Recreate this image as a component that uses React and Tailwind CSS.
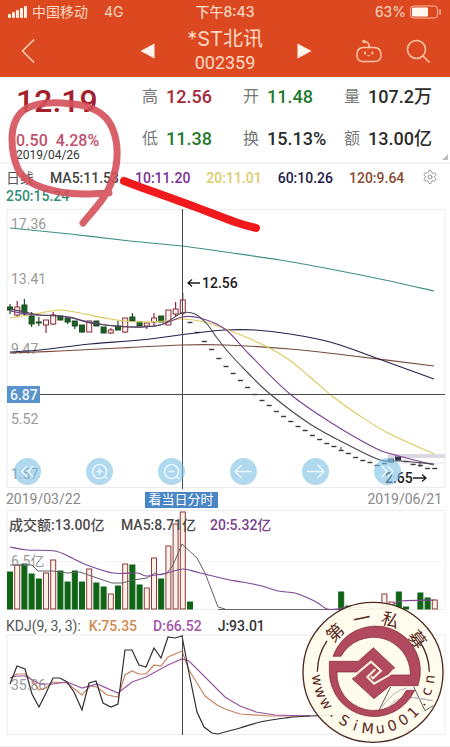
import { Settings } from "lucide-react";

const STEP = 7.2;
const FIRST_X = 10;

// [bodyTop, bodyBottom, high, low, up]
const candles = [
  [307, 310, 304, 314, false],
  [307, 315, 301, 317, true],
  [305, 314, 299, 316, false],
  [316, 324, 312, 327, false],
  [322, 323, 317, 326, false],
  [320, 325, 320, 333, true],
  [315, 324, 312, 325, true],
  [316, 320, 316, 320, false],
  [318, 322, 317, 324, false],
  [321, 326, 321, 329, false],
  [325, 332, 325, 333, false],
  [321, 332, 321, 332, true],
  [321, 326, 321, 326, false],
  [327, 333, 327, 333, false],
  [330, 333, 328, 334, true],
  [326, 330, 321, 330, false],
  [318, 332, 318, 333, true],
  [317, 321, 313, 322, false],
  [322, 326, 322, 326, false],
  [323, 326, 323, 329, true],
  [318, 322, 313, 326, true],
  [316, 322, 316, 322, false],
  [310, 325, 310, 325, true],
  [309, 314, 302, 316, true],
  [300, 313, 293, 315, true],
];

// one-price days, starting right after the last candle
const dashes = [
  322, 332, 341, 349, 358, 366, 373, 380, 387, 394, 400, 405, 411, 416, 421, 426, 430, 435, 439,
  443, 446, 450, 453, 457, 460, 462, 465, 463, 461, 459, 461, 464, 465, 468, 468,
];

// [slot, top, up]
const volumes = [
  [0, 572, false], [1, 565, true], [2, 564, false], [3, 574, false], [4, 579, false],
  [5, 573, true], [6, 560, true], [7, 571, false], [8, 582, false], [9, 571, false],
  [10, 582, false], [11, 569, true], [12, 583, false], [13, 587, false], [14, 594, true],
  [15, 586, false], [16, 564, true], [17, 565, false], [18, 585, false], [19, 588, true],
  [20, 558, true], [21, 579, false], [22, 546, true], [23, 524, true], [24, 512, true],
  [25, 602, false], [46, 592, false], [47, 606, false], [52, 594, true], [53, 602, true],
  [54, 592, false], [55, 607, false], [57, 593, false], [58, 598, false], [59, 600, true],
];

const priceLines = [
  { color: "#3f8f86", points: [[10, 228], [70, 234], [130, 241], [182, 246], [225, 252], [280, 260], [330, 269], [380, 279], [434, 291]] },
  { color: "#7a4a3c", points: [[10, 353], [60, 351], [120, 348], [182, 345], [225, 345], [290, 349], [345, 355], [434, 366]] },
  { color: "#23204e", points: [[10, 352], [40, 350], [90, 344], [140, 340], [195, 333], [225, 330], [255, 330], [290, 334], [330, 342], [368, 355], [434, 379]] },
  { color: "#ddc95c", points: [[10, 318], [35, 314], [60, 310], [80, 313], [110, 319], [140, 322], [165, 321], [182, 319], [205, 322], [225, 329], [255, 341], [285, 357], [310, 377], [332, 396], [360, 416], [390, 434], [434, 454]] },
  { color: "#7b4393", points: [[10, 311], [35, 315], [60, 316], [100, 324], [130, 327], [160, 325], [182, 317], [200, 318], [225, 329], [250, 355], [290, 394], [330, 422], [375, 448], [395, 455], [434, 465]] },
  { color: "#4a4550", points: [[10, 309], [25, 312], [40, 315], [70, 317], [90, 323], [130, 327], [160, 325], [182, 313], [195, 314], [207, 324], [217, 338], [230, 354], [248, 373], [270, 394], [310, 424], [350, 446], [380, 460], [400, 461], [434, 464]] },
];

const volumeAvg = [[10, 565], [32, 565], [38, 571], [53, 571], [67, 573], [80, 572], [97, 578], [112, 583], [122, 583], [133, 580], [147, 578], [155, 573], [160, 575], [167, 573], [173, 565], [182, 544], [197, 558], [205, 573], [218, 607], [225, 609]];
const volumeAvg20 = [[10, 547], [27, 550], [55, 551], [72, 558], [87, 565], [113, 573], [137, 573], [147, 576], [167, 573], [183, 569], [200, 573], [225, 579], [242, 582], [262, 586], [278, 591], [295, 593], [308, 598], [318, 603], [327, 609], [338, 609], [348, 607], [368, 608], [377, 609], [392, 605], [402, 601], [434, 600]];

const lineJ = [[10, 684], [17, 666], [25, 669], [32, 694], [39, 707], [46, 693], [53, 678], [60, 678], [67, 682], [74, 692], [82, 710], [89, 683], [96, 681], [103, 703], [111, 707], [118, 704], [125, 650], [132, 650], [139, 665], [146, 667], [154, 648], [161, 658], [168, 637], [175, 638], [182, 636], [189, 673], [197, 712], [204, 727], [212, 733], [218, 734], [225, 732]];
const tailJ = [[225, 732], [240, 728], [260, 722], [285, 718], [310, 716], [380, 714]];
const lineK = [[10, 678], [17, 674], [25, 674], [32, 680], [39, 690], [46, 688], [53, 682], [67, 683], [82, 695], [90, 686], [97, 687], [107, 695], [118, 697], [125, 675], [132, 671], [139, 674], [146, 674], [154, 665], [161, 666], [168, 657], [182, 651], [189, 670], [197, 683], [205, 696], [217, 705], [225, 709], [240, 714], [270, 716], [310, 716]];
const lineD = [[10, 678], [17, 676], [25, 676], [40, 684], [53, 684], [67, 682], [82, 688], [97, 684], [118, 693], [132, 682], [146, 677], [168, 665], [182, 659], [189, 661], [204, 676], [225, 697], [240, 706], [256, 712], [275, 715], [310, 716]];

const averages = [
  { text: "MA5:11.53", color: "text-[#444444]" },
  { text: "10:11.20", color: "text-[#7a2f96]" },
  { text: "20:11.01", color: "text-[#dccb6a]" },
  { text: "60:10.26", color: "text-[#1c1b4b]" },
  { text: "120:9.64", color: "text-[#8a4b30]" },
  { text: "250:15.24", color: "text-[#2f8f78]" },
];

const quotes = [
  { label: "高", value: "12.56", color: "text-[#a8283a]" },
  { label: "开", value: "11.48", color: "text-[#1f7a2c]" },
  { label: "量", value: "107.2万", color: "text-[#2b2b2b]" },
  { label: "低", value: "11.38", color: "text-[#1f7a2c]" },
  { label: "换", value: "15.13%", color: "text-[#2b2b2b]" },
  { label: "额", value: "13.00亿", color: "text-[#2b2b2b]" },
];

const slotX = (i) => FIRST_X + i * STEP;

const straight = (pts) => "M" + pts.map((p) => p.join(" ")).join("L");

// Catmull-Rom spline as cubic beziers
const smooth = (pts) => {
  let d = `M${pts[0].join(" ")}`;
  for (let i = 0; i < pts.length - 1; i++) {
    const a = pts[i - 1] || pts[i];
    const b = pts[i];
    const c = pts[i + 1];
    const e = pts[i + 2] || c;
    d += `C${b[0] + (c[0] - a[0]) / 6} ${b[1] + (c[1] - a[1]) / 6} ${c[0] - (e[0] - b[0]) / 6} ${c[1] - (e[1] - b[1]) / 6} ${c[0]} ${c[1]}`;
  }
  return d;
};

const StatusBar = () => (
  <div className="flex h-6 items-center justify-between px-2 text-sm text-[#ffd9c4]">
    <div className="flex flex-1 items-center">
      <svg width="20" height="12" viewBox="0 0 20 12" fill="#fff1e6">
        <rect x="0" y="8" width="3" height="4" rx="1" />
        <rect x="4" y="6" width="3" height="6" rx="1" />
        <rect x="8" y="4" width="3" height="8" rx="1" />
        <rect x="12" y="2" width="3" height="10" rx="1" />
        <rect x="16" y="0" width="3" height="12" rx="1" />
      </svg>
      <span className="ml-1">中国移动</span>
      <span className="ml-4">4G</span>
    </div>
    <span className="font-medium">下午8:43</span>
    <div className="flex flex-1 items-center justify-end gap-1">
      <span>63%</span>
      <svg width="32" height="14" viewBox="0 0 32 14" fill="none">
        <rect x="0.5" y="1" width="27" height="12" rx="3" stroke="#f7b79c" />
        <rect x="2" y="2.5" width="16" height="9" rx="1" fill="#fff6ee" />
        <path d="M30 5v4" stroke="#f7b79c" strokeWidth="1.5" strokeLinecap="round" />
      </svg>
    </div>
  </div>
);

const NavBar = () => (
  <div className="flex h-[53px] items-center justify-between px-5">
    <div className="flex flex-1 items-center justify-between">
      <button aria-label="back">
        <svg width="16" height="26" viewBox="0 0 16 26" fill="none" stroke="#ffd0b5" strokeWidth="1.6">
          <path d="M14 1.5L2.5 13L14 24.5" />
        </svg>
      </button>
      <button aria-label="previous stock" className="mr-8">
        <svg width="15" height="16" viewBox="0 0 15 16" fill="#fff4ec">
          <path d="M14.500 0.500V15.500L0.500 8Z" />
        </svg>
      </button>
    </div>
    <div className="text-center text-[#ffd9c4]">
      <h1 className="text-xl leading-6">*ST北讯</h1>
      <p className="font-[Roboto] text-lg leading-6">002359</p>
    </div>
    <div className="flex flex-1 items-center">
      <button aria-label="next stock" className="ml-[34px]">
        <svg width="15" height="16" viewBox="0 0 15 16" fill="#fff4ec">
          <path d="M0.500 0.500V15.500L14.500 8Z" />
        </svg>
      </button>
      <button aria-label="assistant" className="ml-auto">
        <svg width="26" height="24" viewBox="0 0 26 24" fill="none" stroke="#ffc7ab" strokeWidth="1.5" strokeLinecap="round">
          <path d="M7.500 8.500C2.500 8.500 1 12 1 16C1 20.500 3.500 22.500 7 22.500H18.500C22.500 22.500 25 20.500 25 16C25 12 23 8.500 18 8.500Z" />
          <path d="M13 8.500C13.500 5 12 3 8.500 2.500" />
          <circle cx="8" cy="2.500" r="1" fill="#ffc7ab" />
          <path d="M9 13.500v1M16.500 13.500v1" strokeWidth="2" />
          <path d="M11.500 16.500Q12.800 17.500 14 16.500" strokeWidth="1" />
        </svg>
      </button>
      <button aria-label="search" className="ml-6">
        <svg width="24" height="24" viewBox="0 0 24 24" fill="none" stroke="#ffc7ab" strokeWidth="1.5" strokeLinecap="round">
          <circle cx="10.500" cy="10.500" r="9" />
          <path d="M17 17L23 23" />
        </svg>
      </button>
    </div>
  </div>
);

const Quote = () => (
  <section className="grid grid-cols-[138fr_312fr] border-b-2 border-[#f3f1f6] font-medium">
    <div className="pb-px pl-4 pt-2">
      <p className="text-[32px] leading-8 text-[#a3202c]">12.19</p>
      <p className="mt-4 flex gap-2 text-base leading-4 text-[#c2506a]">
        <span>0.50</span>
        <span>4.28%</span>
      </p>
      <p className="text-xs font-normal leading-3 text-[#333333]">2019/04/26</p>
    </div>
    <div className="relative grid grid-cols-[101fr_101fr_110fr] content-start gap-y-[18px] pt-2">
      {quotes.map((item) => (
        <div key={item.label} className="flex items-center gap-2 pl-1 text-lg leading-6">
          <span className="text-base leading-6 font-normal text-[#777777]">{item.label}</span>
          <span className={item.color}>{item.value}</span>
        </div>
      ))}
      <svg className="absolute bottom-0.5 right-0.5" width="6" height="6" viewBox="0 0 6 6" fill="#bdbdbd">
        <path d="M6 0V6H0Z" />
      </svg>
    </div>
  </section>
);

const Averages = () => (
  <section className="flex items-start pl-1.5 pr-3 pt-[5px]">
    <div className="flex flex-1 flex-wrap gap-x-4 text-sm leading-[18px] font-medium">
      <span className="font-normal text-[#555555]">日线</span>
      {averages.map((item) => (
        <span key={item.text} className={item.color}>
          {item.text}
        </span>
      ))}
    </div>
    <button aria-label="chart settings">
      <Settings size={16} strokeWidth={1.3} color="#8a8a8a" />
    </button>
  </section>
);

const PriceChart = () => (
  <svg className="block w-full" viewBox="0 205 450 284" fill="none">
    <rect x="7" y="209.500" width="438" height="278" stroke="#ececee" />
    <g fill="#999999" fontSize="14">
      <text x="11" y="229">17.36</text>
      <text x="11" y="284">13.41</text>
      <text x="11" y="354">9.47</text>
      <text x="11" y="424">5.52</text>
      <text x="11" y="479">1.57</text>
    </g>
    <path d="M388 456H445" stroke="#dcd8e2" strokeWidth="4" />
    <path d="M400 463H445" stroke="#e4e0ea" />
    {candles.map(([top, bottom, high, low, up], i) => (
      <g key={i} stroke={up ? "#8c2b36" : "#1f4a24"}>
        <path d={`M${slotX(i)} ${high}V${low}`} strokeWidth="1.200" />
        <rect
          x={slotX(i) - 2.5}
          y={top}
          width="5"
          height={bottom - top}
          fill={up ? "#fff4f0" : "#17601d"}
        />
      </g>
    ))}
    {dashes.map((y, i) => (
      <path key={i} d={`M${slotX(i + 25) - 2.5} ${y + 0.5}h5`} stroke="#3a3a3a" strokeWidth="1.400" />
    ))}
    <path d="M341 447v4M420 462v5" stroke="#3a3a3a" />
    <rect x="388.500" y="459" width="5" height="3" fill="#7aa3bd" stroke="#35505f" />
    <rect x="395.500" y="457" width="5" height="3" fill="#33324a" stroke="#33324a" />
    {priceLines.map((line) => (
      <path key={line.color} d={smooth(line.points)} stroke={line.color} strokeWidth="1.100" />
    ))}
    <path d="M40 394.500H445M182.500 209V489" stroke="#4a4a4a" />
    <rect x="7" y="386" width="33" height="17" fill="#5a92cb" />
    <g fontSize="14" fontWeight="500">
      <text x="10" y="400" fill="#eef7ff">6.87</text>
      <text x="202" y="288" fill="#1c1c1c">12.56</text>
      <text x="385" y="483" fill="#1c1c1c">2.65</text>
    </g>
    <path d="M200 283H188M192 279.500L188 283L192 286.500" stroke="#1c1c1c" strokeWidth="1.300" />
    <path d="M413 478H426M422 474.500L426 478L422 481.500" stroke="#1c1c1c" strokeWidth="1.300" />
  </svg>
);

const tools = [
  { name: "first", icon: <path d="M13 8L8 13.500L13 19M19 8L14 13.500L19 19" /> },
  { name: "zoom in", icon: <path d="M20.500 13.500A7 7 0 1 0 18.500 18.400L21.500 21M20.500 13.500A7 7 0 0 1 18.500 18.400M13.500 10.500V16.500M10.500 13.500H16.500" /> },
  { name: "zoom out", icon: <path d="M20.500 13.500A7 7 0 1 0 18.500 18.400L21.500 21M20.500 13.500A7 7 0 0 1 18.500 18.400M10.500 13.500H16.500" /> },
  { name: "left", icon: <path d="M22 13.500H5M11.500 7L5 13.500L11.500 20" /> },
  { name: "right", icon: <path d="M5 13.500H22M15.500 7L22 13.500L15.500 20" /> },
  { name: "last", icon: <path d="M8 8L13 13.500L8 19M14 8L19 13.500L14 19" /> },
];

const ChartTools = () => (
  <div className="absolute bottom-1 left-[3%] right-[11%] flex justify-between">
    {tools.map((tool) => (
      <button key={tool.name} aria-label={tool.name} className="rounded-full bg-[#7cc0e6]/60">
        <svg width="27" height="27" viewBox="0 0 27 27" fill="none" stroke="#e9f8ff" strokeWidth="1.500">
          {tool.icon}
        </svg>
      </button>
    ))}
  </div>
);

const VolumeChart = () => (
  <svg className="block w-full" viewBox="0 510 450 104" fill="none">
    <path d="M7 510.500H445V609.500H7Z" stroke="#ececee" />
    <path d="M7 561.500H445" stroke="#f6f4f6" />
    <path d="M218 609.500H392" stroke="#6a6470" />
    {volumes.map(([slot, top, up]) => (
      <rect
        key={slot}
        x={slotX(slot) - 2.5}
        y={top}
        width="5"
        height={609 - top}
        fill={up ? "#fdf0e6" : "#0f6416"}
        stroke={up ? "#8c3a3e" : "#0f6416"}
      />
    ))}
    <text x="11" y="566" fill="#999999" fontSize="14">6.5亿</text>
    <path d={straight(volumeAvg)} stroke="#66606a" />
    <path d={smooth(volumeAvg20)} stroke="#7f4796" strokeWidth="1.100" />
    <g fontSize="14" fontWeight="500">
      <text x="9" y="530" fill="#4a4a4a">成交额:13.00亿</text>
      <text x="121" y="530" fill="#4a4a4a">MA5:8.71亿</text>
      <text x="210" y="530" fill="#7c4190">20:5.32亿</text>
    </g>
  </svg>
);

const KdjChart = () => (
  <>
    <div className="flex gap-4 pl-1.5 pt-1 text-sm leading-4 font-medium">
      <p className="flex gap-2">
        <span className="font-normal text-[#555555]">KDJ(9, 3, 3):</span>
        <span className="text-[#d08a4e]">K:75.35</span>
      </p>
      <span className="text-[#a355a8]">D:66.52</span>
      <span className="text-[#333333]">J:93.01</span>
    </div>
    <svg className="block w-full" viewBox="0 634 450 113" fill="none">
      <rect x="7" y="635" width="438" height="99.500" stroke="#ececee" />
      <path d="M0 746.500H450" stroke="#ececee" />
      <text x="11" y="690" fill="#999999" fontSize="14">35.86</text>
      <path d={straight(lineK)} stroke="#c98362" strokeWidth="1.200" />
      <path d={straight(lineD)} stroke="#9a55a0" strokeWidth="1.200" />
      <path d={straight(lineJ) + smooth(tailJ)} stroke="#2f2c33" strokeWidth="1.200" />
      <path d="M182.500 635V735" stroke="#4a4a4a" />
    </svg>
  </>
);

const sealTop = [
  ["第", -134],
  ["一", -102],
  ["私", -72],
  ["募", -37],
];
const sealBottom = "www.SiMu001.cn".split("");

const onRing = (angle, radius) => {
  const rad = (angle * Math.PI) / 180;
  return [250 + radius * Math.cos(rad), 245 + radius * Math.sin(rad)];
};

const Seal = () => (
  <svg className="absolute bottom-1 right-1.5 w-[142px]" viewBox="36 31 426 427" fill="none">
    <circle cx="249" cy="245" r="210" fill="#fffbec" fillOpacity="0.93" stroke="#4d2b22" strokeWidth="4" />
    <path d="M82 243A168 168 0 0 1 111 151M388 151A168 168 0 0 1 418 243" stroke="#4d2b22" strokeWidth="4" />
    <path d="M268 357L302 288M371 288L405 360L430 345" stroke="#5d5a68" strokeWidth="3" />
    <path d="M275 350Q310 300 350 292M300 345Q330 305 425 330M375 322L430 330" stroke="#b9b3bd" strokeWidth="3" />
    {/* upper hook: ring from top left round to the right bar */}
    <g fill="#b14a5e" stroke="#7d2437" strokeWidth="2">
      <path d="M129 197A134 134 0 0 1 384 285H300L252 324L187 265L204 244H141A110 110 0 0 0 349 299L374 299A134 134 0 0 1 118 244V212H205L250 171L314 231L298 253H361A111 111 0 0 0 153 197Z" />
    </g>
    <path d="M190 259L206 244L243 213L273 240L249 263L243 257M313 236L298 253L252 279L232 259L256 236" stroke="#fff3dc" strokeWidth="6" />
    <g fill="#5a2a22" textAnchor="middle">
      {sealTop.map(([char, angle]) => {
        const [x, y] = onRing(angle, 146);
        return (
          <text key={char} x={x} y={y} fontSize="52" transform={`rotate(${angle + 90} ${x} ${y})`}>
            {char}
          </text>
        );
      })}
      {sealBottom.map((char, i) => {
        const angle = 172 - i * 12.7;
        const [x, y] = onRing(angle, 184);
        return (
          <text
            key={i}
            x={x}
            y={y}
            fontSize="43"
            fontFamily="DejaVu Sans, sans-serif"
            transform={`rotate(${angle - 90} ${x} ${y})`}
          >
            {char}
          </text>
        );
      })}
    </g>
  </svg>
);

// hand-drawn circle and pointer on top of the quote
const Marks = () => (
  <svg
    className="pointer-events-none absolute left-0 top-0 w-full"
    viewBox="0 0 450 240"
    fill="none"
    strokeLinecap="round"
    strokeLinejoin="round"
  >
    <path
      d={smooth([[109, 193], [85, 194], [60, 192], [36, 185], [21, 174], [14, 157], [12, 138], [15, 122], [24, 110], [40, 104], [62, 103], [88, 107], [106, 118], [115, 136], [117, 158], [113, 178], [104, 197], [83, 223]])}
      stroke="#d4505a"
      strokeOpacity="0.900"
      strokeWidth="7"
    />
    <path
      d={smooth([[124, 181], [140, 187], [190, 205], [235, 222], [256, 228]])}
      stroke="#f01a1c"
      strokeWidth="8"
    />
  </svg>
);

const App = () => {
  return (
    <main className="relative bg-white font-[Roboto,'Noto_Sans_CJK_SC',sans-serif]">
      <header className="bg-[#dc4820] font-[Inter,'Noto_Sans_CJK_SC',sans-serif]">
        <StatusBar />
        <NavBar />
      </header>
      <Quote />
      <Averages />
      <div className="relative">
        <PriceChart />
        <ChartTools />
      </div>
      <div className="flex items-center pl-1.5 pr-2 text-sm leading-[21px] text-[#888888]">
        <span>2019/03/22</span>
        <button className="ml-16 bg-[#4a86c5] px-1 text-[13px] leading-4 text-white">看当日分时</button>
        <span className="ml-auto">2019/06/21</span>
      </div>
      <VolumeChart />
      <KdjChart />
      <Marks />
      <Seal />
    </main>
  );
};

export default App;
